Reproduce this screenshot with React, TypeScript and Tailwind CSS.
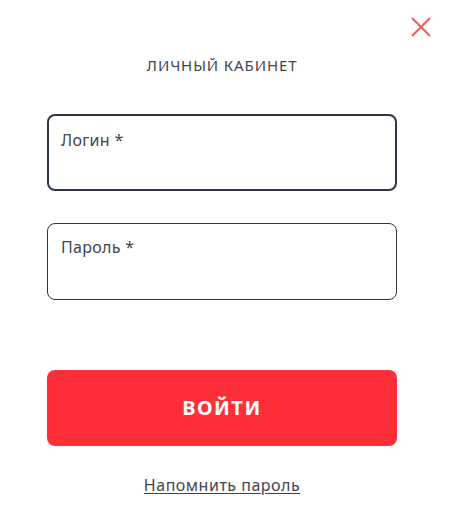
import React from "react";

function Field({label, active, type = "text"}: {label: string; active?: boolean; type?: string}) {
  return (
    <label
      className={
        "flex h-[77px] w-[350px] flex-col rounded-lg " +
        (active ? "border-2 border-[#2e3546] px-3 pt-3" : "border border-[#2e3546] px-[13px] pt-[11px]")
      }
    >
      <span className="text-[16px] leading-6 tracking-[0.3px] text-[#3e4555]">{label}</span>
      <input type={type} className="mt-1 w-full bg-transparent text-[16px] text-[#2e3546] outline-none"/>
    </label>
  );
}

export default function App() {
  return (
    <div
      className="relative flex h-[508px] w-[449px] flex-col items-center bg-white pr-[5px] pt-[55px]"
      style={{fontFamily: '"Noto Sans", "Open Sans", sans-serif'}}
    >
      <button className="absolute right-[17px] top-[16px] h-[22px] w-[22px] text-[#f0625f]" aria-label="Закрыть">
        <svg viewBox="0 0 22 22" className="h-full w-full" fill="none" stroke="currentColor" strokeWidth="2.2">
          <path d="M2 2 L20 20 M20 2 L2 20"/>
        </svg>
      </button>

      <h2 className="text-[15px] leading-5 tracking-[0.9px] text-[#3e4555]">ЛИЧНЫЙ КАБИНЕТ</h2>

      <div className="mt-[39px] flex flex-col gap-8">
        <Field label="Логин *" active/>
        <Field label="Пароль *" type="password"/>
      </div>

      <button className="mt-[70px] h-[76px] w-[350px] rounded-lg bg-[#ff2f39] text-[20px] font-bold tracking-[1.5px] text-white">
        ВОЙТИ
      </button>

      <a href="#" className="mt-[27px] text-[16px] leading-6 tracking-[0.5px] text-[#3e4555] underline underline-offset-2">
        Напомнить пароль
      </a>
    </div>
  );
}
